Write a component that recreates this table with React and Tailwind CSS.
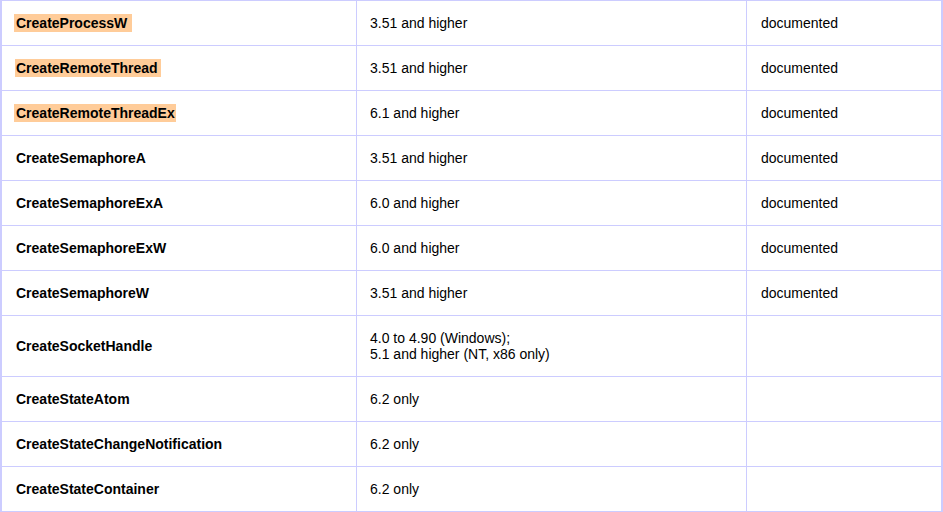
import React from "react";

const rows = [
	{ name: "CreateProcessW", mark: "-ml-[2px] pl-[2px] pr-[5px]", ver: ["3.51 and higher"], doc: "documented" },
	{ name: "CreateRemoteThread", mark: "-ml-[1px] pl-[1px] pr-[3px]", ver: ["3.51 and higher"], doc: "documented" },
	{ name: "CreateRemoteThreadEx", mark: "-ml-[2px] pl-[2px] pr-[1px]", ver: ["6.1 and higher"], doc: "documented" },
	{ name: "CreateSemaphoreA", ver: ["3.51 and higher"], doc: "documented" },
	{ name: "CreateSemaphoreExA", ver: ["6.0 and higher"], doc: "documented" },
	{ name: "CreateSemaphoreExW", ver: ["6.0 and higher"], doc: "documented" },
	{ name: "CreateSemaphoreW", ver: ["3.51 and higher"], doc: "documented" },
	{ name: "CreateSocketHandle", ver: ["4.0 to 4.90 (Windows);", "5.1 and higher (NT, x86 only)"], doc: "" },
	{ name: "CreateStateAtom", ver: ["6.2 only"], doc: "" },
	{ name: "CreateStateChangeNotification", ver: ["6.2 only"], doc: "" },
	{ name: "CreateStateContainer", ver: ["6.2 only"], doc: "" },
];

export default function App() {
	return (
		<div
			className="w-[943px] h-[512px] overflow-hidden bg-white text-black text-[14px] leading-4 border-t border-l-2 border-r-2 border-[#ccccff]"
			style={{ fontFamily: '"Liberation Sans", Arial, sans-serif' }}
		>
			{rows.map((row) => (
				<div key={row.name} className="flex border-b border-[#ccccff]">
					{/* Function name */}
					<div className="w-[355px] shrink-0 border-r border-[#ccccff] pl-[14px] py-[14px] flex items-center font-bold">
						<div className="h-4">
							{row.mark ? (
								<span className={`bg-[#ffcc99] ${row.mark} py-[1px]`}>{row.name}</span>
							) : (
								<span>{row.name}</span>
							)}
						</div>
					</div>
					{/* Versions */}
					<div className="w-[390px] shrink-0 border-r border-[#ccccff] pl-[13px] py-[14px] flex flex-col justify-center">
						{row.ver.map((v) => (
							<span key={v}>{v}</span>
						))}
					</div>
					{/* Documentation */}
					<div className="flex-1 pl-[14px] py-[14px] flex items-center">{row.doc}</div>
				</div>
			))}
		</div>
	);
}
